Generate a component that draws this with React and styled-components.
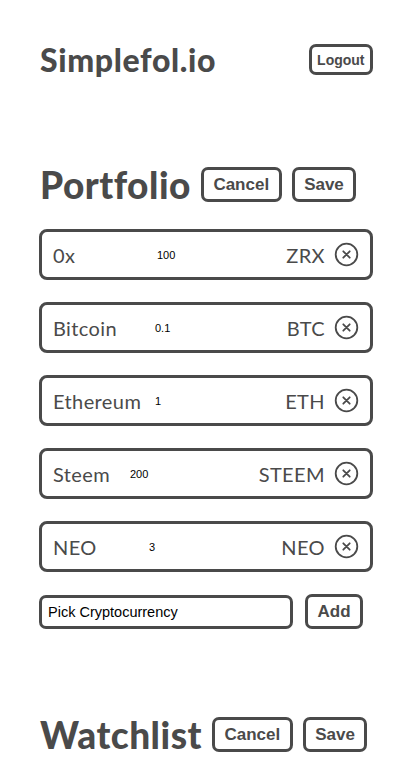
import React from 'react';
import styled, { createGlobalStyle } from 'styled-components';

const GlobalStyle = createGlobalStyle`
  body {
    margin: 0;
    background: #fff;
    color: #4a4a4a;
    font-family: Lato, 'Noto Sans', sans-serif;
  }
`;

const Page = styled.div`
  width: 334px;
  margin-left: 39px;
  padding-top: 44px;
`;

const Header = styled.header`
  display: flex;
  align-items: center;
  justify-content: space-between;
  height: 31px;
`;

const Brand = styled.h1`
  margin: 0 0 0 1px;
  font-size: 32px;
  font-weight: 900;
  letter-spacing: 0.65px;
  line-height: 1;
`;

const Button = styled.button`
  height: ${(p) => (p.small ? 31 : 35)}px;
  padding: 0 ${(p) => (p.small ? 5.5 : 9.5)}px;
  border: 3px solid #4a4a4a;
  border-radius: 7px;
  background: #fff;
  color: #4a4a4a;
  font-family: 'Liberation Sans', Arial, sans-serif;
  font-weight: 700;
  font-size: ${(p) => (p.small ? 14 : 17)}px;
  cursor: pointer;
`;

const SectionHead = styled.div`
  display: flex;
  align-items: center;
  gap: 10px;
  margin-top: ${(p) => p.top}px;
  height: 35px;
`;

const SectionTitle = styled.h2`
  margin: 0 0 0 1px;
  font-size: 37px;
  font-weight: 900;
  letter-spacing: 0.5px;
  line-height: 1;
`;

const List = styled.div`
  display: flex;
  flex-direction: column;
  gap: 22px;
  margin-top: 27px;
`;

const Row = styled.div`
  display: flex;
  align-items: center;
  height: 51px;
  box-sizing: border-box;
  border: 3px solid #4a4a4a;
  border-radius: 8px;
  padding: 0 11px 0 11px;
  font-size: 20px;
  letter-spacing: 0.4px;
`;

const Name = styled.span`
  width: ${(p) => p.w}px;
  flex-shrink: 0;
`;

const Amount = styled.span`
  font-family: 'Liberation Sans', Arial, sans-serif;
  font-size: 11px;
  letter-spacing: 0;
  color: #000;
  flex: 1;
`;

const Symbol = styled.span`
  margin-right: 9px;
`;

const Remove = styled.svg`
  width: 25px;
  height: 25px;
  flex-shrink: 0;
`;

const AddRow = styled.div`
  display: flex;
  align-items: center;
  gap: 12px;
  margin-top: 22px;
`;

const Picker = styled.div`
  width: 254px;
  height: 34px;
  box-sizing: border-box;
  border: 3px solid #4a4a4a;
  border-radius: 7px;
  display: flex;
  align-items: center;
  padding-left: 6px;
  font-family: 'Liberation Sans', Arial, sans-serif;
  font-size: 14.5px;
  color: #000;
`;

const coins = [
  { name: '0x', amount: '100', symbol: 'ZRX', w: 104 },
  { name: 'Bitcoin', amount: '0.1', symbol: 'BTC', w: 102 },
  { name: 'Ethereum', amount: '1', symbol: 'ETH', w: 102 },
  { name: 'Steem', amount: '200', symbol: 'STEEM', w: 77 },
  { name: 'NEO', amount: '3', symbol: 'NEO', w: 96 },
];

const CloseIcon = () => (
  <Remove viewBox="0 0 25 25">
    <circle cx="12.5" cy="12.5" r="10.8" fill="none" stroke="#4a4a4a" strokeWidth="1.8" />
    <path d="M9.3 9.3 L15.7 15.7 M15.7 9.3 L9.3 15.7" stroke="#4a4a4a" strokeWidth="1.8" strokeLinecap="round" />
  </Remove>
);

export default function App() {
  return (
    <>
      <GlobalStyle />
      <Page>
        <Header>
          <Brand>Simplefol.io</Brand>
          <Button small>Logout</Button>
        </Header>

        <SectionHead top={92}>
          <SectionTitle>Portfolio</SectionTitle>
          <Button>Cancel</Button>
          <Button>Save</Button>
        </SectionHead>

        <List>
          {coins.map((c) => (
            <Row key={c.symbol}>
              <Name w={c.w}>{c.name}</Name>
              <Amount>{c.amount}</Amount>
              <Symbol>{c.symbol}</Symbol>
              <CloseIcon />
            </Row>
          ))}
        </List>

        <AddRow>
          <Picker>Pick Cryptocurrency</Picker>
          <Button>Add</Button>
        </AddRow>

        <SectionHead top={88}>
          <SectionTitle>Watchlist</SectionTitle>
          <Button>Cancel</Button>
          <Button>Save</Button>
        </SectionHead>
      </Page>
    </>
  );
}
